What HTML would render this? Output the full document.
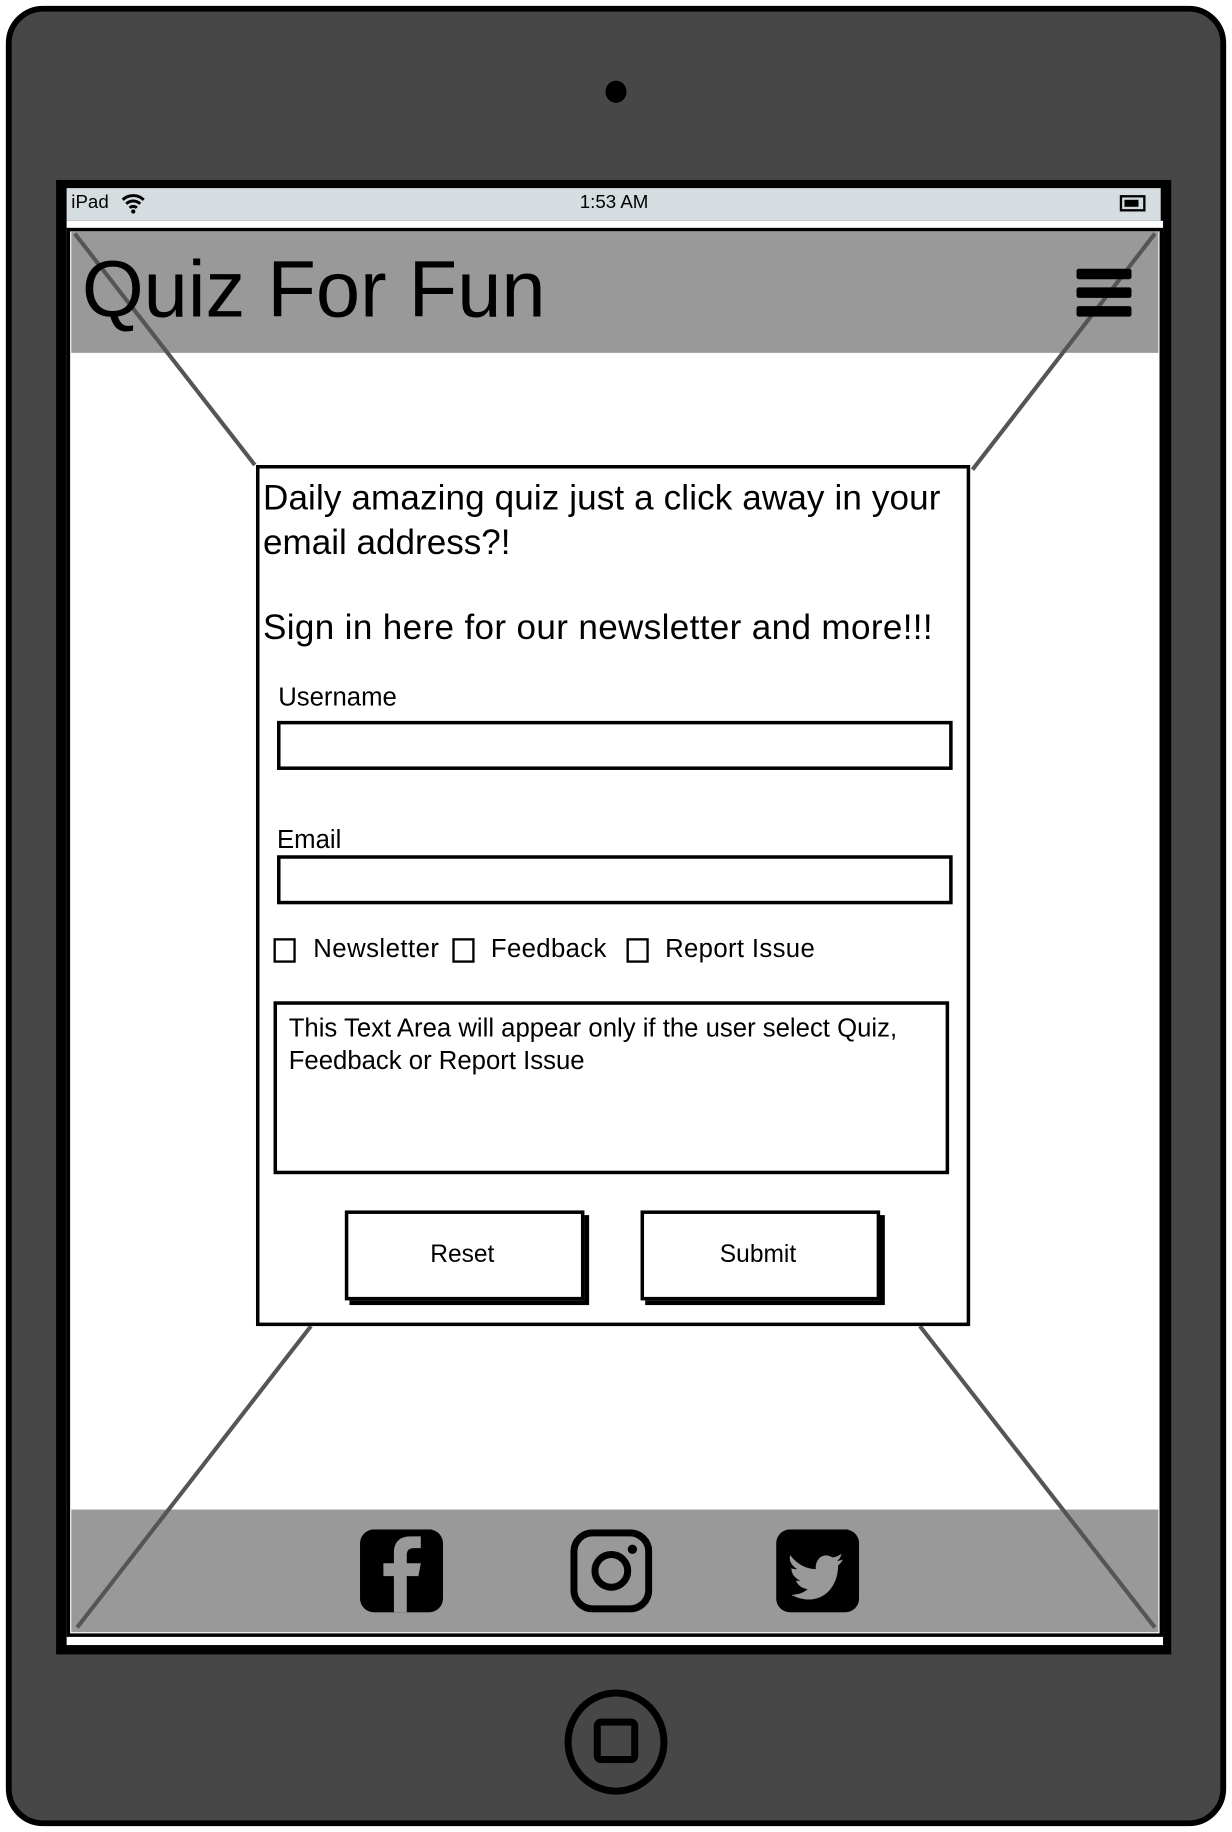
<!DOCTYPE html>
<html><head><meta charset="utf-8"><style>
html,body{margin:0;padding:0;background:#fff;overflow:hidden}
body{width:1232px;height:1832px;position:relative}
#w{position:absolute;left:0;top:0;width:1054px;height:1568px;transform-origin:0 0;transform:scale(1.16888,1.16837);font-family:"Liberation Sans",sans-serif;color:#000}
.a{position:absolute;box-sizing:border-box}
.t{position:absolute;white-space:nowrap;line-height:1}
</style></head><body><div id="w">
<div class="a" style="left:5px;top:5px;width:1044px;height:1558px;background:#474747;border:5px solid #000;border-radius:32px"></div>
<div class="a" style="left:518px;top:69px;width:18px;height:19px;border-radius:50%;background:#000"></div>
<div class="a" style="left:48px;top:154px;width:954px;height:1262px;background:#000"></div>
<div class="a" style="left:57px;top:161px;width:936px;height:28px;background:#d6dde0"></div>
<div class="t" style="left:61px;top:166px;font-size:16px">iPad</div>
<svg class="a" style="left:103px;top:165px" width="22" height="18" viewBox="0 0 22 18"><path d="M2 6 A13 13 0 0 1 20 6" stroke="#000" stroke-width="2.5" fill="none"/><path d="M5 9.5 A8.5 8.5 0 0 1 17 9.5" stroke="#000" stroke-width="2.5" fill="none"/><path d="M8 13 A4 4 0 0 1 14 13" stroke="#000" stroke-width="2.5" fill="none"/><circle cx="11" cy="16" r="1.8"/></svg>
<div class="t" style="left:496px;top:166px;font-size:16px">1:53 AM</div>
<div class="a" style="left:958px;top:167px;width:22px;height:14px;border:2px solid #000"><div style="margin:2px;width:12px;height:6px;background:#000"></div></div>
<div class="a" style="left:57px;top:189px;width:938px;height:1219px;background:#fff"></div>
<div class="a" style="left:57px;top:195px;width:938px;height:1206px;border:3px solid #000"></div>
<div class="a" style="left:61px;top:198px;width:930px;height:104px;background:#999"></div>
<div class="a" style="left:61px;top:1292px;width:930px;height:105px;background:#999"></div>
<svg class="a" style="left:0;top:0" width="1054" height="1568"><g stroke="#555" stroke-width="3.5"><line x1="64" y1="200" x2="218" y2="398"/><line x1="988" y1="200" x2="832" y2="402"/><line x1="266" y1="1135" x2="66" y2="1393"/><line x1="787" y1="1135" x2="988" y2="1393"/></g></svg>
<div class="t" style="left:70px;top:214px;font-size:68px">Quiz For Fun</div>
<div class="a" style="left:921px;top:230px;width:47px;height:9px;background:#000;border-radius:2px"></div>
<div class="a" style="left:921px;top:246px;width:47px;height:9px;background:#000;border-radius:2px"></div>
<div class="a" style="left:921px;top:262px;width:47px;height:9px;background:#000;border-radius:2px"></div>
<div class="a" style="left:219px;top:398px;width:611px;height:737px;background:#fff;border:3px solid #000"></div>
<div class="t" style="left:225px;top:412px;font-size:30px;letter-spacing:0.1px">Daily amazing quiz just a click away in your</div>
<div class="t" style="left:225px;top:450px;font-size:30px">email address?!</div>
<div class="t" style="left:225px;top:523px;font-size:30px;letter-spacing:0.3px">Sign in here for our newsletter and more!!!</div>
<div class="t" style="left:238px;top:586px;font-size:22px">Username</div>
<div class="a" style="left:237px;top:617px;width:578px;height:42px;border:3px solid #000"></div>
<div class="t" style="left:237px;top:708px;font-size:22px">Email</div>
<div class="a" style="left:237px;top:732px;width:578px;height:42px;border:3px solid #000"></div>
<div class="a" style="left:234px;top:803px;width:19px;height:21px;border:2px solid #000"></div>
<div class="t" style="left:268px;top:801px;font-size:22px;letter-spacing:0.4px">Newsletter</div>
<div class="a" style="left:387px;top:803px;width:19px;height:21px;border:2px solid #000"></div>
<div class="t" style="left:420px;top:801px;font-size:22px;letter-spacing:0.3px">Feedback</div>
<div class="a" style="left:536px;top:803px;width:19px;height:21px;border:2px solid #000"></div>
<div class="t" style="left:569px;top:801px;font-size:22px;letter-spacing:0.3px">Report Issue</div>
<div class="a" style="left:234px;top:857px;width:578px;height:148px;border:3px solid #000"></div>
<div class="t" style="left:247px;top:866px;font-size:22px;line-height:28px">This Text Area will appear only if the user select Quiz,<br>Feedback or Report Issue</div>
<div class="a" style="left:295px;top:1036px;width:205px;height:77px;border:3px solid #000;box-shadow:4px 4px 0 #000;text-align:center;line-height:69px;font-size:21px;padding-right:4px">Reset</div>
<div class="a" style="left:548px;top:1036px;width:205px;height:77px;border:3px solid #000;box-shadow:4px 4px 0 #000;text-align:center;line-height:69px;font-size:21px;padding-right:4px">Submit</div>
<svg class="a" style="left:308px;top:1309px" width="71" height="71" viewBox="0 0 71 71"><rect width="71" height="71" rx="12" fill="#000"/><path d="M40 71 V40 H50 L52 29 H40 V22 C40 18 42 16 46 16 H52 V6 H43 C34 6 29 11 29 20 V29 H20 V40 H29 V71 Z" fill="#999"/></svg>
<svg class="a" style="left:488px;top:1309px" width="70" height="71" viewBox="0 0 70 71"><rect x="3" y="3" width="64" height="65" rx="16" fill="none" stroke="#000" stroke-width="6"/><circle cx="35" cy="35.5" r="14" fill="none" stroke="#000" stroke-width="6"/><circle cx="53" cy="17" r="4"/></svg>
<svg class="a" style="left:664px;top:1309px" width="71" height="71" viewBox="0 0 71 71"><rect width="71" height="71" rx="12" fill="#000"/><path d="M12 22 C18 30 26 34 34 34 C33 25 41 19 48 24 C51 24 54 22 56 21 C55 24 54 26 52 27 C54 27 56 26 57 26 C56 28 54 30 53 31 C53 46 44 60 28 60 C22 60 17 58 13 56 C19 56 24 54 27 51 C22 51 18 47 17 44 C19 44 20 44 21 44 C16 42 13 38 13 33 C14 34 16 34 18 34 C12 30 11 26 12 22 Z" fill="#999"/></svg>
<div class="a" style="left:483px;top:1446px;width:88px;height:90px;border:6px solid #000;border-radius:50%"></div>
<div class="a" style="left:508px;top:1471px;width:38px;height:38px;border:6px solid #000;border-radius:6px"></div>
</div></body></html>
